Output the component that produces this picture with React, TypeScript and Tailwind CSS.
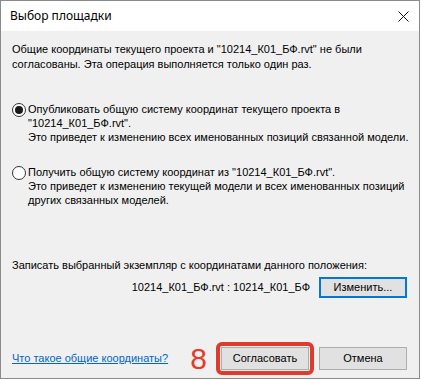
function Radio({ checked }: { checked?: boolean }) {
  return (
    <div className="mt-[1px] w-[14px] h-[14px] shrink-0 rounded-full border border-[#333333] bg-white flex items-center justify-center">
      {checked && <div className="w-[8px] h-[8px] rounded-full bg-[#1a1a1a]" />}
    </div>
  )
}

function App() {
  return (
    <div className="w-[421px] h-[380px] bg-white font-['Liberation_Sans',sans-serif] text-[11px] text-black">
      <div className="w-[420px] h-[379px] border border-[#8a8a8a] bg-[#f0f0f0] flex flex-col">
        <div className="h-[30px] bg-white flex items-center justify-between pl-[9px] pr-[9px] shrink-0">
          <span className="text-[12px] font-['Noto_Sans',sans-serif]">Выбор площадки</span>
          <svg width="11" height="11" viewBox="0 0 11 11" className="mr-[1px]">
            <path d="M0.5 0.5 L10.5 10.5 M10.5 0.5 L0.5 10.5" stroke="#111" strokeWidth="1" />
          </svg>
        </div>

        <div className="flex-1 flex flex-col px-[11px] whitespace-nowrap">
          <p className="mt-[11px] leading-[15px]">
            Общие координаты текущего проекта и "10214_К01_БФ.rvt" не были<br />
            согласованы. Эта операция выполняется только один раз.
          </p>

          <div className="flex gap-[2px] mt-[30px]">
            <Radio checked />
            <p className="leading-[14px]">
              Опубликовать общую систему координат текущего проекта в<br />
              "10214_К01_БФ.rvt".<br />
              Это приведет к изменению всех именованных позиций связанной модели.
            </p>
          </div>

          <div className="flex gap-[2px] mt-[21px]">
            <Radio />
            <p className="leading-[14px]">
              Получить общую систему координат из "10214_К01_БФ.rvt".<br />
              Это приведет к изменению текущей модели и всех именованных позиций<br />
              других связанных моделей.
            </p>
          </div>

          <p className="mt-[51px] leading-[15px]">Записать выбранный экземпляр с координатами данного положения:</p>

          <div className="flex items-center justify-end mt-[4px] pr-[1px]">
            <span className="mr-[9px]">10214_К01_БФ.rvt : 10214_К01_БФ</span>
            <button className="w-[88px] h-[21px] border-2 border-[#0078d7] bg-[#e1e1e1]">Изменить...</button>
          </div>

          <div className="flex items-center justify-between mt-[44px] pr-[1px]">
            <a className="text-[#0066cc] underline">Что такое общие координаты?</a>
            <div className="flex items-center">
              <span className="text-[#e53b2c] text-[30px] leading-[30px] font-['Liberation_Sans',sans-serif]">8</span>
              <div className="ml-[9px] rounded-[6px] border-[4px] border-[#e03a2c] p-[1px]">
                <button className="w-[88px] h-[23px] border border-[#adadad] bg-[#e1e1e1]">Согласовать</button>
              </div>
              <button className="ml-[5px] w-[88px] h-[23px] border border-[#adadad] bg-[#e1e1e1]">Отмена</button>
            </div>
          </div>
        </div>
      </div>
    </div>
  )
}

export default App;
